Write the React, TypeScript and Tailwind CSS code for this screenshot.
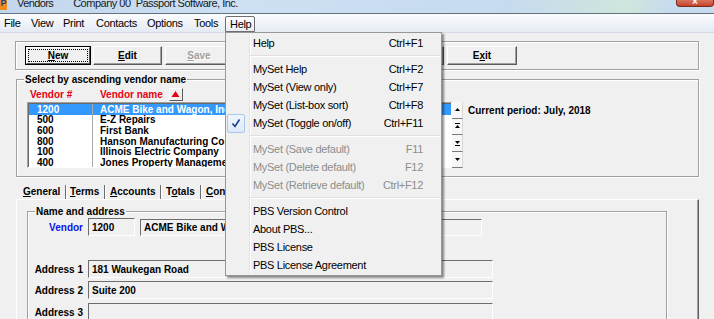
import React from "react";

type Item =
  | { kind: "sep" }
  | { kind: "item"; label: string; keys?: string; disabled?: boolean; checked?: boolean };

const helpItems: Item[] = [
  { kind: "item", label: "Help", keys: "Ctrl+F1" },
  { kind: "sep" },
  { kind: "item", label: "MySet Help", keys: "Ctrl+F2" },
  { kind: "item", label: "MySet (View only)", keys: "Ctrl+F7" },
  { kind: "item", label: "MySet (List-box sort)", keys: "Ctrl+F8" },
  { kind: "item", label: "MySet (Toggle on/off)", keys: "Ctrl+F11", checked: true },
  { kind: "sep" },
  { kind: "item", label: "MySet (Save default)", keys: "F11", disabled: true },
  { kind: "item", label: "MySet (Delete default)", keys: "F12", disabled: true },
  { kind: "item", label: "MySet (Retrieve default)", keys: "Ctrl+F12", disabled: true },
  { kind: "sep" },
  { kind: "item", label: "PBS Version Control" },
  { kind: "item", label: "About PBS..." },
  { kind: "item", label: "PBS License" },
  { kind: "item", label: "PBS License Agreement" },
];

const vendors = [
  { id: "1200", name: "ACME Bike and Wagon, Inc." },
  { id: "500", name: "E-Z Repairs" },
  { id: "600", name: "First Bank" },
  { id: "800", name: "Hanson Manufacturing Company" },
  { id: "100", name: "Illinois Electric Company" },
  { id: "400", name: "Jones Property Management" },
];

function Mn({ children }: { children: string }) {
  return <span className="underline decoration-1 underline-offset-[1px]">{children}</span>;
}

function Btn({ w, children, disabled }: { w: string; children: React.ReactNode; disabled?: boolean }) {
  return (
    <div
      className={`${w} h-[19px] flex items-center justify-center border border-t-white border-l-white border-r-[#5a5a5a] border-b-[#5a5a5a] shadow-[inset_-1px_-1px_0_#a0a0a0] text-[10px] font-bold ${
        disabled ? "text-[#a0a0a0] [text-shadow:1px_1px_0_#fff]" : "text-black"
      }`}
    >
      <span>{children}</span>
    </div>
  );
}

function Field({ w, h, children }: { w: string; h: string; children?: React.ReactNode }) {
  return (
    <div
      className={`${w} ${h} flex items-center pl-[3px] border border-t-[#6d6d6d] border-l-[#6d6d6d] border-r-white border-b-white text-[10px] font-bold text-black overflow-hidden whitespace-nowrap`}
    >
      {children}
    </div>
  );
}

function ScrollBtn({ kind }: { kind: "up" | "pgup" | "pgdn" | "down" }) {
  return (
    <div className="h-[16.5px] w-[11px] flex items-center justify-center bg-[#f7f7f7] border-b border-[#7a7a7a] border-r border-r-[#d8d8d8]">
      <svg width="7" height="8" viewBox="0 0 7 8">
        {kind === "up" && <path d="M1 5 L3.5 2 L6 5 Z" fill="#000" />}
        {kind === "pgup" && (
          <>
            <rect x="1" y="1" width="5" height="1" fill="#000" />
            <path d="M1 6 L3.5 3 L6 6 Z" fill="#000" />
          </>
        )}
        {kind === "pgdn" && (
          <>
            <path d="M1 2 L3.5 5 L6 2 Z" fill="#000" />
            <rect x="1" y="6" width="5" height="1" fill="#000" />
          </>
        )}
        {kind === "down" && <path d="M1 3 L3.5 6 L6 3 Z" fill="#000" />}
      </svg>
    </div>
  );
}

export default function App() {
  return (
    <div className="relative w-[714px] h-[319px] overflow-hidden bg-[#f0f0f0] font-['Liberation_Sans',Arial,sans-serif] text-black select-none">
      {/* title bar */}
      <div className="h-[14px] flex items-start overflow-hidden border-b border-[#66717f] bg-[linear-gradient(90deg,#c2d6ed_0%,#cde0f3_35%,#c6daf0_70%,#cfe5dc_88%,#c6daf0_94%)]">
        <div className="w-[7px] h-[10px] bg-[#f28c1e] flex items-start justify-center overflow-hidden">
          <span className="text-[9px] leading-[9px] font-bold text-[#1d3f9a] -mt-[1px]">P</span>
        </div>
        <span className="ml-[10px] -mt-[3px] text-[11px] leading-[13px] tracking-[-0.6px] text-[#1a1a1a]">Vendors</span>
        <span className="ml-[20px] -mt-[3px] text-[11px] leading-[13px] tracking-[-0.5px] text-[#1a1a1a] whitespace-pre">
          Company 00  Passport Software, Inc.
        </span>
        <div className="ml-auto w-[38px] h-[7px] rounded-b-[4px] bg-[linear-gradient(#d9735f,#c4432c)] border border-t-0 border-[#7a2a1c] flex items-end justify-center">
          <span className="text-[10px] leading-[8px] font-bold text-white">×</span>
        </div>
      </div>

      {/* menu bar */}
      <div className="h-[19px] flex items-stretch pl-[4px] text-[11px] tracking-[-0.3px] bg-[linear-gradient(#fbfcfe,#e4eaf3)] border-b border-[#d5dbe4]">
        <div className="w-[27px] flex items-center">File</div>
        <div className="w-[32px] flex items-center">View</div>
        <div className="w-[33px] flex items-center">Print</div>
        <div className="w-[51px] flex items-center">Contacts</div>
        <div className="w-[47px] flex items-center">Options</div>
        <div className="w-[31px] flex items-center">Tools</div>
        <div className="w-[30px] mt-[2px] flex items-center pl-[4px] border border-[#6f6f6f] rounded-t-[2px] bg-[linear-gradient(#fdfdfd,#e9edf3)]">
          Help
        </div>
      </div>

      {/* body */}
      <div className="pl-[15px] pr-[15px]">
        {/* toolbar */}
        <div className="mt-[8px] h-[29px] border border-[#a0a0a0] shadow-[inset_1px_1px_0_#fff,1px_1px_0_#fff] pl-[9px] pt-[4px] flex items-start">
          <div className="w-[66px] h-[19px] border border-black">
            <div className="h-full border border-t-white border-l-white border-r-[#5a5a5a] border-b-[#5a5a5a] p-[1px]">
              <div className="h-full border border-dotted border-black flex items-center justify-center text-[10px] font-bold">
                <span>
                  <Mn>N</Mn>ew
                </span>
              </div>
            </div>
          </div>
          <div className="ml-[2px]">
            <Btn w="w-[69px]">
              <Mn>E</Mn>dit
            </Btn>
          </div>
          <div className="ml-[3px]">
            <Btn w="w-[68px]" disabled>
              <Mn>S</Mn>ave
            </Btn>
          </div>
          <div className="ml-[3px]">
            <Btn w="w-[68px]">
              <Mn>D</Mn>elete
            </Btn>
          </div>
          <div className="ml-[3px]">
            <Btn w="w-[68px]">
              <Mn>C</Mn>ancel
            </Btn>
          </div>
          <div className="ml-[3px]">
            <Btn w="w-[66px]">
              <Mn>P</Mn>rint
            </Btn>
          </div>
          <div className="ml-[3px]">
            <Btn w="w-[70px]">
              E<Mn>x</Mn>it
            </Btn>
          </div>
        </div>

        {/* select group */}
        <div className="mt-[9px] ml-[1px] h-[98px] border border-[#a0a0a0] shadow-[inset_1px_1px_0_#fff,1px_1px_0_#fff]">
          <div className="-mt-[7px] h-[13px] pl-[7px] flex">
            <span className="px-[1px] bg-[#f0f0f0] text-[10px] leading-[13px] font-bold">Select by ascending vendor name</span>
          </div>
          <div className="mt-[1px] h-[14px] pl-[13px] flex items-center text-[10px] font-bold text-[#e60012]">
            <span className="w-[70px]">Vendor #</span>
            <span>Vendor name</span>
            <div className="ml-[6px] w-[14px] h-[13px] flex items-center justify-center border border-t-white border-l-white border-r-[#5a5a5a] border-b-[#5a5a5a] bg-[#f0f0f0]">
              <svg width="9" height="8" viewBox="0 0 9 8">
                <path d="M0.5 7 L4.5 1 L8.5 7 Z" fill="#e60012" />
              </svg>
            </div>
          </div>
          <div className="mt-[1px] ml-[10px] flex items-start">
            <div className="w-[425px] h-[66px] bg-white border border-t-[#a0a0a0] border-l-[#a0a0a0] border-r-white border-b-white shadow-[inset_1px_1px_0_#696969] pt-[1px] pl-[1px] overflow-hidden">
              {vendors.map((v, i) => (
                <div
                  key={v.id}
                  className={`h-[10.66px] flex items-center text-[10px] font-bold whitespace-nowrap ${
                    i === 0 ? "bg-[#3399ff] text-white" : "text-black"
                  }`}
                >
                  <div className="w-[64px] h-full pl-[8px] flex items-center border-r border-[#a9a9a9]">{v.id}</div>
                  <div className="pl-[7px]">{v.name}</div>
                </div>
              ))}
            </div>
            <div className="w-[11px] h-[66px] flex flex-col bg-[#f7f7f7]">
              <ScrollBtn kind="up" />
              <ScrollBtn kind="pgup" />
              <ScrollBtn kind="pgdn" />
              <ScrollBtn kind="down" />
            </div>
            <span className="ml-[5px] mt-[3px] text-[10px] font-bold leading-[12px]">Current period: July, 2018</span>
          </div>
        </div>

        {/* tabs */}
        <div className="mt-[7px] h-[15px] flex items-stretch text-[10px] font-bold">
          <div className="w-[50px] pl-[8px] flex items-center">
            <span>
              <Mn>G</Mn>eneral
            </span>
          </div>
          <div className="w-[2px] mt-[1px] border-l border-[#6d6d6d] border-r border-r-white" />
          <div className="w-[37px] pl-[3px] flex items-center">
            <span>
              <Mn>T</Mn>erms
            </span>
          </div>
          <div className="w-[2px] mt-[1px] border-l border-[#6d6d6d] border-r border-r-white" />
          <div className="w-[54px] pl-[4px] flex items-center">
            <span>
              <Mn>A</Mn>ccounts
            </span>
          </div>
          <div className="w-[2px] mt-[1px] border-l border-[#6d6d6d] border-r border-r-white" />
          <div className="w-[38px] pl-[4px] flex items-center">
            <span>
              T<Mn>o</Mn>tals
            </span>
          </div>
          <div className="w-[2px] mt-[1px] border-l border-[#6d6d6d] border-r border-r-white" />
          <div className="w-[56px] pl-[4px] flex items-center">
            <span>
              <Mn>C</Mn>ontacts
            </span>
          </div>
        </div>

        {/* tab panel */}
        <div className="ml-[1px] h-[140px] border border-t-white border-l-white border-r-[#5f5f5f] border-b-[#5f5f5f] shadow-[inset_-1px_0_0_#a0a0a0] pt-[11px] pl-[10px]">
          <div className="w-[640px] h-[140px] border border-[#a0a0a0] shadow-[inset_1px_1px_0_#fff,1px_1px_0_#fff]">
            <div className="-mt-[7px] h-[13px] pl-[7px] flex">
              <span className="px-[1px] bg-[#f0f0f0] text-[10px] leading-[13px] font-bold">Name and address</span>
            </div>
            <div className="flex items-start">
              <div className="w-[55px] h-[18px] flex items-center justify-end text-[10px] font-bold text-[#0a14e6]">Vendor</div>
              <div className="ml-[5px]">
                <Field w="w-[47px]" h="h-[18px]">1200</Field>
              </div>
              <div className="ml-[5px] mt-[1px]">
                <Field w="w-[342px]" h="h-[17px]">ACME Bike and Wagon, Inc.</Field>
              </div>
            </div>
            <div className="mt-[24px] flex items-center">
              <div className="w-[55px] text-right text-[10px] font-bold">Address 1</div>
              <div className="ml-[5px]">
                <Field w="w-[405px]" h="h-[18px]">181 Waukegan Road</Field>
              </div>
            </div>
            <div className="mt-[3px] flex items-center">
              <div className="w-[55px] text-right text-[10px] font-bold">Address 2</div>
              <div className="ml-[5px]">
                <Field w="w-[405px]" h="h-[18px]">Suite 200</Field>
              </div>
            </div>
            <div className="mt-[4px] flex items-center">
              <div className="w-[55px] text-right text-[10px] font-bold">Address 3</div>
              <div className="ml-[5px]">
                <Field w="w-[405px]" h="h-[18px]" />
              </div>
            </div>
          </div>
        </div>
      </div>

      {/* Help dropdown menu */}
      <div className="absolute left-[225px] top-[32px] w-[217px] h-[244px] border border-[#979797] shadow-[2px_2px_2px_rgba(0,0,0,0.45)] bg-[#f0f0f0] py-[1px] text-[11px] tracking-[-0.3px]">
        <div className="h-full bg-[linear-gradient(90deg,transparent_23px,#e2e3e3_23px,#e2e3e3_24px,#ffffff_24px,#ffffff_25px,transparent_25px)]">
          {helpItems.map((it, i) =>
            it.kind === "sep" ? (
              <div key={i} className="h-[8px] flex flex-col justify-center ml-[24px] mr-[1px]">
                <div className="h-[1px] bg-[#e0e0e0]" />
                <div className="h-[1px] bg-white" />
              </div>
            ) : (
              <div key={i} className={`h-[18px] flex items-center ${it.disabled ? "text-[#8d8d8d]" : "text-black"}`}>
                <div className="w-[27px] h-full flex items-center">
                  {it.checked && (
                    <div className="ml-[1px] w-[18px] h-[19px] rounded-[2px] border border-[#a8c8ee] bg-[linear-gradient(#f0f6fd,#dde9f8)] flex items-center justify-center">
                      <svg width="10" height="10" viewBox="0 0 10 10">
                        <path d="M1.5 5.5 L4 8.5 L8.5 1.5" fill="none" stroke="#1b3e91" strokeWidth="1.6" />
                      </svg>
                    </div>
                  )}
                </div>
                <span className="flex-1 whitespace-nowrap">{it.label}</span>
                {it.keys && <span className="pr-[18px] whitespace-nowrap">{it.keys}</span>}
              </div>
            )
          )}
        </div>
      </div>
    </div>
  );
}
